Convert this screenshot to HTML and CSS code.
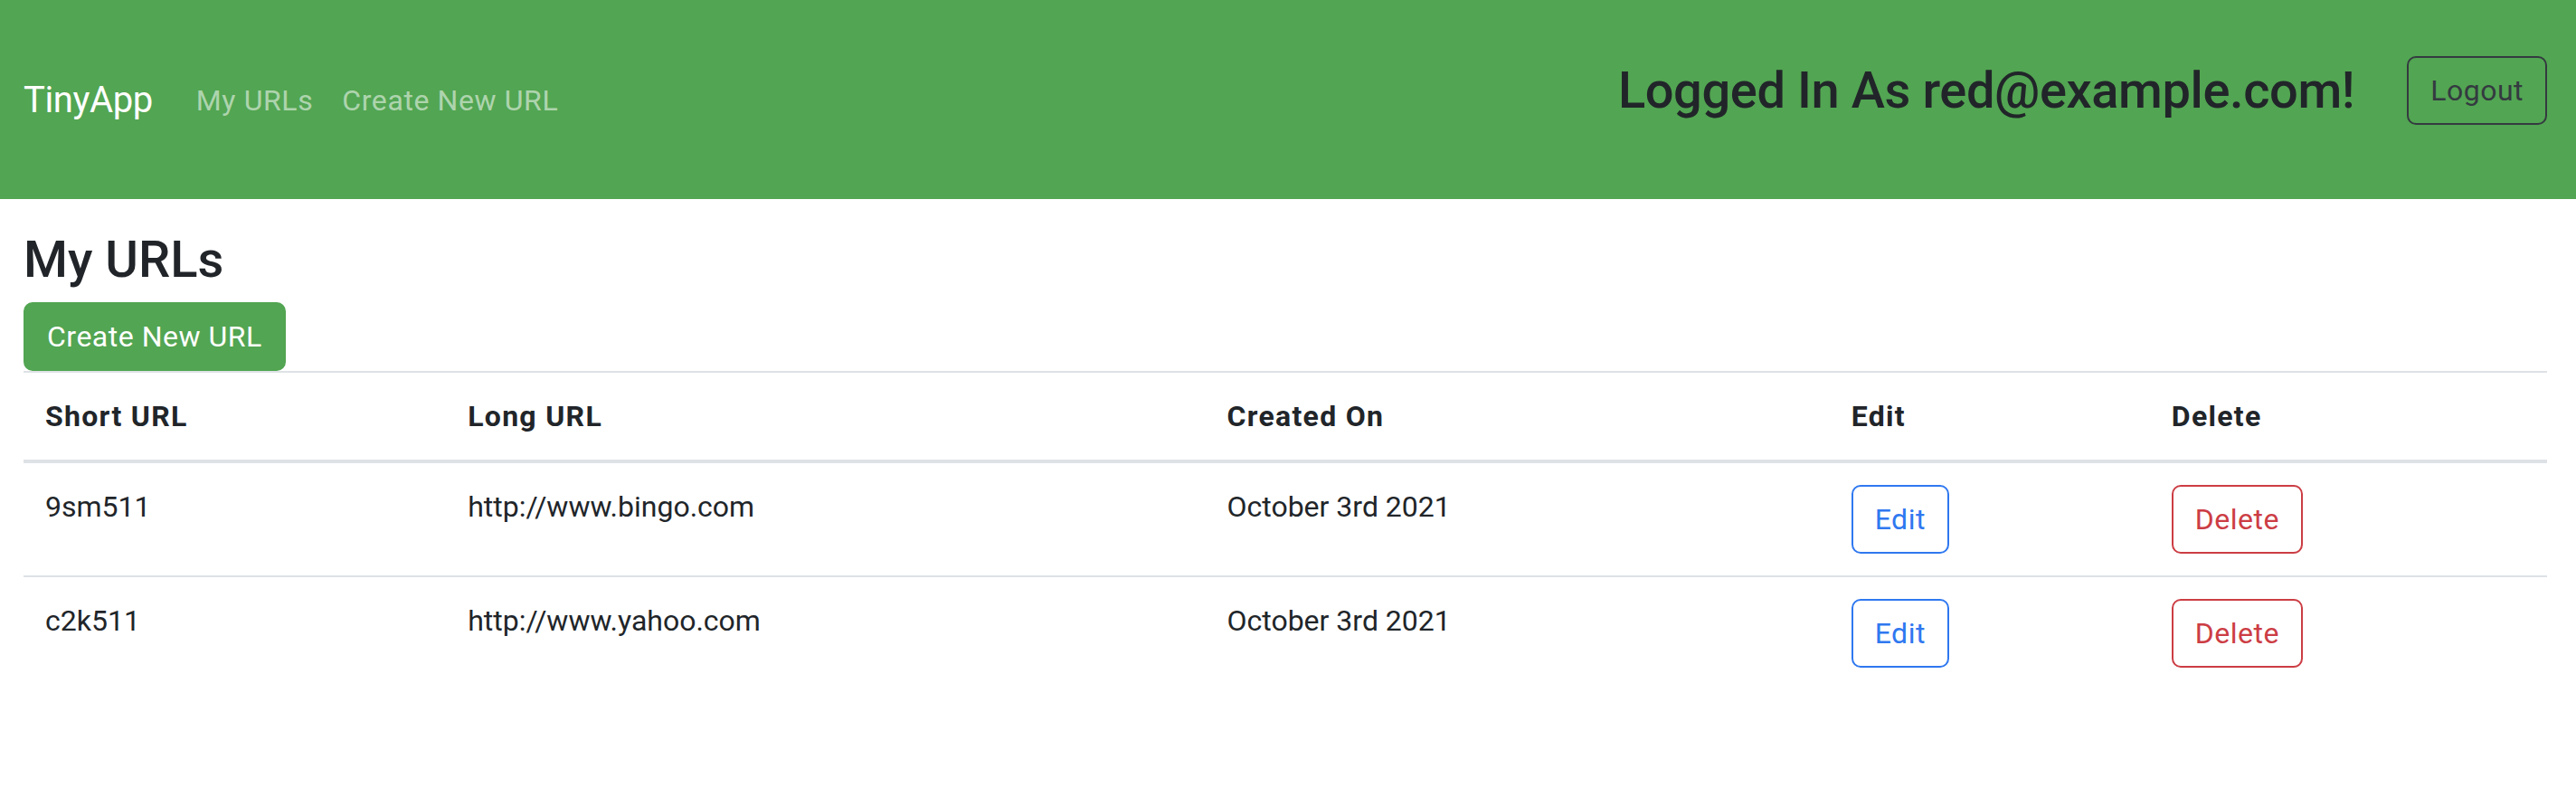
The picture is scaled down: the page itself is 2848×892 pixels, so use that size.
FILE: index.html
```html
<!DOCTYPE html>
<html lang="en">
<head>
<meta charset="utf-8">
<title>TinyApp</title>
<link rel="stylesheet" href="styles.css">
</head>
<body>
<nav class="navbar">
  <div class="nav-left">
    <a class="brand" href="#">TinyApp</a>
    <a class="nav-link" href="#">My URLs</a>
    <a class="nav-link" href="#">Create New URL</a>
  </div>
  <div class="nav-right">
    <h3 class="logged">Logged In As red@example.com!</h3>
    <button class="btn btn-outline-dark">Logout</button>
  </div>
</nav>
<main class="main">
  <h3 class="title">My URLs</h3>
  <div class="actions">
    <a class="btn btn-success" href="#">Create New URL</a>
  </div>
  <table class="table">
    <colgroup>
      <col class="c1"><col class="c2"><col class="c3"><col class="c4"><col class="c5">
    </colgroup>
    <thead>
      <tr>
        <th>Short URL</th>
        <th>Long URL</th>
        <th>Created On</th>
        <th>Edit</th>
        <th>Delete</th>
      </tr>
    </thead>
    <tbody>
      <tr>
        <td>9sm511</td>
        <td>http://www.bingo.com</td>
        <td>October 3rd 2021</td>
        <td><button class="btn btn-outline-primary">Edit</button></td>
        <td><button class="btn btn-outline-danger">Delete</button></td>
      </tr>
      <tr>
        <td>c2k511</td>
        <td>http://www.yahoo.com</td>
        <td>October 3rd 2021</td>
        <td><button class="btn btn-outline-primary">Edit</button></td>
        <td><button class="btn btn-outline-danger">Delete</button></td>
      </tr>
    </tbody>
  </table>
</main>
</body>
</html>
```

FILE: styles.css
```css
* { box-sizing: border-box; }
html, body { margin: 0; padding: 0; }
body {
  font-family: Roboto, "Liberation Sans", Arial, sans-serif;
  font-size: 32px;
  line-height: 48px;
  color: #212529;
  background: #ffffff;
}
a { text-decoration: none; }

.navbar {
  height: 220px;
  background: #52a552;
  display: flex;
  align-items: center;
  justify-content: space-between;
  padding: 0 32px 0 26px;
}
.nav-left {
  display: flex;
  align-items: center;
  padding-top: 2px;
}
.brand {
  color: #ffffff;
  font-size: 40px;
  line-height: 60px;
  letter-spacing: -0.4px;
  margin-right: 32px;
}
.nav-link {
  color: rgba(255, 255, 255, 0.55);
  font-size: 32px;
  line-height: 48px;
  letter-spacing: 0.6px;
  padding: 0 16px;
}
.nav-right {
  display: flex;
  align-items: center;
  margin-bottom: 20px;
}
.logged {
  margin: 0 58px 0 0;
  font-size: 56px;
  line-height: 67px;
  font-weight: 500;
  letter-spacing: -0.4px;
  color: #212529;
}

.btn {
  display: inline-block;
  font-family: inherit;
  font-size: 32px;
  line-height: 48px;
  font-weight: 400;
  letter-spacing: 0.5px;
  padding: 12px 24px;
  border: 2px solid transparent;
  border-radius: 10px;
  background: transparent;
  cursor: pointer;
  text-align: center;
}
.btn-outline-dark {
  color: #343a40;
  border-color: #343a40;
}
.btn-success {
  background: #52a552;
  border-color: #52a552;
  color: #ffffff;
}
.btn-outline-primary {
  color: #2f78f0;
  border-color: #2f78f0;
}
.btn-outline-danger {
  color: #cc3d44;
  border-color: #cc3d44;
}

.main {
  padding: 0 32px 0 26px;
}
.title {
  margin: 34px 0 13px;
  font-size: 56px;
  line-height: 67px;
  font-weight: 500;
}
.actions {
  display: flex;
}

.table {
  width: 100%;
  table-layout: fixed;
  border-collapse: collapse;
}
.c1 { width: 467px; }
.c2 { width: 839px; }
.c3 { width: 690px; }
.c4 { width: 354px; }
.c5 { width: 439px; }
.table th,
.table td {
  padding: 24px;
  text-align: left;
  vertical-align: top;
  border-top: 2px solid #dee2e6;
}
.table th {
  font-weight: 700;
  letter-spacing: 1.3px;
  border-bottom: 4px solid #dee2e6;
}
```
